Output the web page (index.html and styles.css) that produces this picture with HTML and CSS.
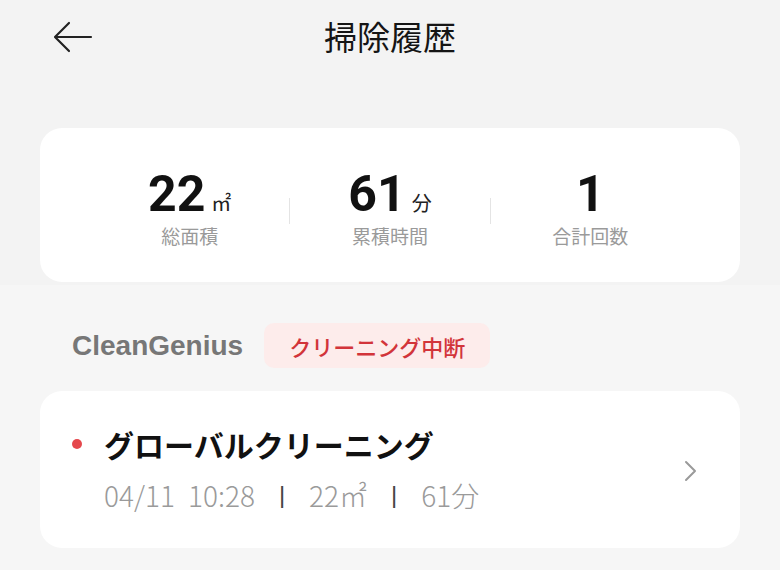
FILE: index.html
```html
<!DOCTYPE html>
<html lang="ja">
<head>
<meta charset="utf-8">
<link rel="stylesheet" href="styles.css">
</head>
<body>
<div class="top">
  <header class="navbar">
    <svg class="back" width="40" height="32" viewBox="0 0 40 32" aria-hidden="true">
      <path d="M38 16 H3 M16 2 L2 16 L16 30" fill="none" stroke="#222" stroke-width="2.2" stroke-linecap="round" stroke-linejoin="round"/>
    </svg>
    <h1 class="title">掃除履歴</h1>
  </header>
  <section class="stats">
    <div class="stat">
      <div class="num">22<span class="unit">㎡</span></div>
      <div class="label">総面積</div>
    </div>
    <div class="divider"></div>
    <div class="stat">
      <div class="num">61<span class="unit">分</span></div>
      <div class="label">累積時間</div>
    </div>
    <div class="divider"></div>
    <div class="stat">
      <div class="num">1</div>
      <div class="label">合計回数</div>
    </div>
  </section>
</div>
<div class="lower">
  <div class="section-head">
    <span class="brand">CleanGenius</span>
    <span class="badge">クリーニング中断</span>
  </div>
  <section class="record">
    <div class="record-body">
      <div class="record-title"><span class="dot"></span>グローバルクリーニング</div>
      <div class="meta"><span>04/11</span><span class="time">10:28</span><span class="sep">|</span><span>22㎡</span><span class="sep">|</span><span>61分</span></div>
    </div>
    <svg class="chev" width="18" height="24" viewBox="0 0 18 24" aria-hidden="true">
      <path d="M4 3 L13 12 L4 21" fill="none" stroke="#9a9a9a" stroke-width="2" stroke-linecap="round" stroke-linejoin="round"/>
    </svg>
  </section>
</div>
</body>
</html>
```
FILE: styles.css
```css
html, body {
  margin: 0;
  padding: 0;
}
body {
  width: 780px;
  height: 570px;
  overflow: hidden;
  background: #f6f6f6;
  font-family: Roboto, "Noto Sans CJK JP", sans-serif;
  color: #1a1a1a;
}
.top {
  background: #f3f3f3;
  height: 285px;
  padding: 0 40px;
  box-sizing: border-box;
}
.navbar {
  height: 72px;
  display: flex;
  align-items: center;
  justify-content: center;
  position: relative;
}
.back {
  position: absolute;
  left: 13px;
  top: 21px;
}
.title {
  margin: 0;
  font-family: "Noto Sans CJK JP", sans-serif;
  font-weight: 400;
  font-size: 33px;
  line-height: 40px;
  color: #151515;
}
.stats {
  margin-top: 56px;
  height: 154px;
  background: #fff;
  border-radius: 22px;
  display: flex;
  align-items: flex-start;
  padding: 44px 50px 0;
  box-sizing: border-box;
}
.stat {
  flex: 1;
  display: flex;
  flex-direction: column;
  align-items: center;
}
.num {
  font-weight: 700;
  font-size: 50px;
  line-height: 44px;
  height: 44px;
  color: #111;
  display: flex;
  align-items: baseline;
}
.unit {
  font-family: "Noto Sans CJK JP", sans-serif;
  font-weight: 400;
  font-size: 20px;
  line-height: 20px;
  margin-left: 6px;
  color: #222;
}
.label {
  margin-top: 10px;
  font-family: "Liberation Sans", "Noto Sans CJK JP", sans-serif;
  font-size: 19px;
  line-height: 24px;
  color: #9a9a9a;
}
.divider {
  width: 1px;
  height: 26px;
  margin-top: 26px;
  background: #e4e4e4;
}
.lower {
  padding: 0 40px;
}
.section-head {
  margin-top: 38px;
  height: 45px;
  display: flex;
  align-items: center;
  padding-left: 32px;
}
.brand {
  font-family: "Liberation Sans", Arial, sans-serif;
  font-weight: 700;
  font-size: 28px;
  color: #777;
}
.badge {
  margin-left: 21px;
  height: 45px;
  padding: 0 25px;
  display: flex;
  align-items: center;
  border-radius: 10px;
  background: #fdeceb;
  color: #d2343a;
  font-family: "Noto Sans CJK JP", sans-serif;
  font-weight: 500;
  font-size: 22px;
}
.record {
  margin-top: 23px;
  height: 157px;
  background: #fff;
  border-radius: 22px;
  box-sizing: border-box;
  padding: 33px 40px 0 32px;
  display: flex;
  align-items: flex-start;
  justify-content: space-between;
}
.record-title {
  display: flex;
  align-items: center;
  height: 40px;
  font-family: "Noto Sans CJK JP", sans-serif;
  font-weight: 700;
  font-size: 30px;
  color: #111;
}
.dot {
  width: 10px;
  height: 10px;
  border-radius: 50%;
  background: #e5484d;
  margin-right: 22px;
}
.meta {
  margin-top: 15px;
  padding-left: 32px;
  height: 32px;
  display: flex;
  align-items: center;
  font-family: "Noto Sans CJK JP", sans-serif;
  font-size: 28px;
  font-weight: 300;
  color: #9a9a9a;
}
.time {
  margin-left: 13px;
}
.sep {
  font-family: "Liberation Sans", Arial, sans-serif;
  font-weight: 400;
  color: #444;
  margin: 0 24px;
  font-size: 24px;
}
.chev {
  margin-top: 35px;
}
```
